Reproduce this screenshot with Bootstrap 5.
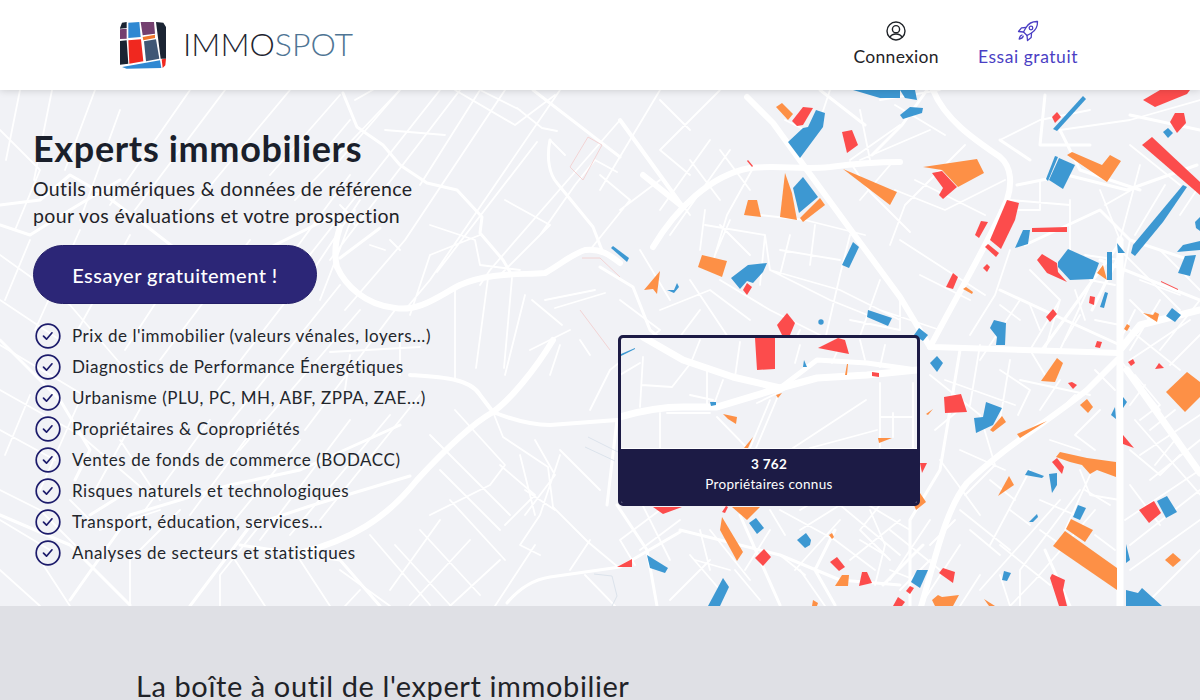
<!DOCTYPE html>
<html lang="fr">
<head>
    <meta charset="UTF-8">
    <meta name="viewport" content="width=device-width, initial-scale=1.0">
    <title>Immospot</title>
    <link href="https://cdn.jsdelivr.net/npm/bootstrap@5.3.0/dist/css/bootstrap.min.css" rel="stylesheet">
    <style>
        body { font-family: "Lato", "Liberation Sans", sans-serif; color: #1f2328; background: #dfe0e5; }
        .top-nav { height: 90px; background: #fff; padding: 0 122px 0 120px; box-shadow: 0 0 8px rgba(0,0,0,.18); z-index: 5; }
        .logo-word { font-size: 32px; font-weight: 300; color: #1e2530; margin-left: 16px; position: relative; top: -1px; }
        .logo-word span { color: #4f7594; }
        .nav-item-link { color: #1f2328; font-size: 17.5px; line-height: 22px; text-decoration: none; letter-spacing: .3px; }
        .nav-item-link svg { display: block; margin: 0 auto 5px; }
        .nav-item-link.trial { color: #4b3fc4; letter-spacing: .55px; }
        .nav-item-link.trial svg { margin: -1px auto 4px; }
        .nav-gap { gap: 39px; margin-top: -2px; }
        .hero { height: 516px; background: #f1f2f6; overflow: hidden; }
        .hero-map { left: 0; top: 0; }
        .hero-text { padding: 36px 0 0 33px; }
        .hero-text h1 { font-size: 36px; line-height: 44px; font-weight: 700; color: #1a1f2b; margin: 0 0 5px; letter-spacing: .65px; }
        .hero-sub { font-size: 19.5px; line-height: 27px; margin: 0 0 16px; letter-spacing: .35px; }
        .try-btn { width: 284px; height: 59px; background: #2c2677; color: #fff; font-size: 20px; font-weight: 500; border: 1px solid #241f68; letter-spacing: .45px; display: flex; align-items: center; justify-content: center; }
        .try-btn:hover { background: #2c2677; color: #fff; }
        .check-list { margin: 16px 0 0 2px; }
        .check-list li { height: 31px; gap: 11px; font-size: 17px; letter-spacing: .55px; color: #23262c; }
        .stat-box { left: 618px; top: 245px; width: 302px; height: 171px; border: 3px solid #1c1b45; border-radius: 5px; background: #f1f2f6; overflow: hidden; }
        .stat-box svg { display: block; }
        .stat-foot { height: 55px; background: #1c1b45; color: #fff; font-size: 13.5px; line-height: 20px; padding-top: 5px; letter-spacing: .3px; border-top: 1px solid #fff; }
        .tools { height: 94px; overflow: hidden; padding: 62px 0 0 136px; }
        .tools h2 { font-size: 29px; font-weight: 400; line-height: 36px; margin: 0; letter-spacing: .6px; color: #1f2328; }
        .rd { fill: none; stroke: #fff; stroke-linecap: round; stroke-linejoin: round; }
        .o { fill: #fd9046; } .r { fill: #fc4c4c; } .b { fill: #3d98d2; }
    </style>
</head>
<body>
    <nav class="navbar top-nav position-relative d-flex justify-content-between align-items-center">
        <a class="d-flex align-items-center text-decoration-none" href="#">
            <svg width="47" height="47" viewBox="60 60 141 141">
                <path fill="#1b2433" d="M60 78l6-16 14-2v18l-20 2zM60 117l20-2 5 70-25 3zM168 60l22 2 8 13v95l-16 0z"/>
                <path fill="#74406f" d="M60 82l20-2v30l-20 1zM122 60h40l3 35-37 5z"/>
                <path fill="#2f88d2" d="M85 62l33-2 4 45-37 3zM66 195l114-20 4 23-104 2z"/>
                <path fill="#f0752a" d="M128 105l37-7v10l-35 7z"/>
                <path fill="#f0281f" d="M85 115l38-3 7 66-42 7zM185 172l13-2-2 20-8 8z"/>
                <path fill="#3f5775" d="M132 118l36-6 10 58-40 8z"/>
            </svg>
            <span class="logo-word">IMMO<span>SPOT</span></span>
        </a>
        <div class="d-flex nav-gap text-center">
            <a class="nav-item-link" href="#">
                <svg width="20" height="20" viewBox="0 0 20 20" fill="none" stroke="#1f2328" stroke-width="1.4"><circle cx="10" cy="10" r="9"/><circle cx="10" cy="8.2" r="3.6"/><path d="M3.8 16.4c1.2-2.4 3.400-3.400 6.200-3.400s5 1 6.200 3.400"/></svg>
                Connexion
            </a>
            <a class="nav-item-link trial" href="#">
                <svg width="22" height="22" viewBox="0 0 22 22" fill="none" stroke="#4b3fc4" stroke-width="1.3" stroke-linejoin="round" stroke-linecap="round"><path d="M20.500 1.500c-5-.2-9 2-11.500 6l-2.500 4.500 3.500 3.500 4.500-2.500c4-2.500 6.200-6.500 6-11.500z"/><circle cx="14" cy="8" r="1.800"/><path d="M9 7.500l-4.500.3-3 3.700 5 .5M14.500 13l-.3 4.500-3.700 3-.5-5M5 15c-1.500.5-2.500 2-2.800 4 2-.3 3.500-1.300 4-2.800"/></svg>
                Essai gratuit
            </a>
        </div>
    </nav>

    <section class="hero position-relative">
        <svg class="hero-map position-absolute" width="1200" height="516" viewBox="0 90 1200 516">
            <g class="rd" stroke-width="1.800">
                <path d="M0 130l40 40-25 60M52 90l-18 90M20 90l-14 70M95 90l-30 80M120 110l-40 110M190 90l-80 115M225 90l-90 120M290 90l-100 120M340 95l-70 80M400 90l-105 110"/>
                <path d="M440 90l-150 190M460 90l-130 170M505 90l-100 150-60 70M560 90l-130 190-25 30M620 120l-130 150-10 15M520 110l-40-20M455 90l60 35 40-30M517 108l25 20 15 3M537 142l-100 130M505 200l45 25M550 225l-50 50M550 140l15 15M595 160l-20 25-35 50M595 160l22 12M520 270l-40-5-5-25-45-15M430 255l50-20M430 255l-20 60M400 250l-10-10M370 245l15 5M320 300l35-90M300 290l60-90M280 270l70-95M345 210l10 15M340 205l15 15"/>
                <path d="M480 90l-60 95M400 90l-60 70M355 100l35-20M350 120l-25 30M385 130l60 5M0 255l70 50 60 70M0 300l60 40M0 345l100 60M30 240l-25 60M80 230l-45 100M130 235l-55 100M190 250l-65 100M250 240l-90 120M310 270l-100 130M340 285l-120 150M360 310l-120 140M395 310l-90 120M455 290l0 60 0 30M488 278l-12 90M512 278l-8 90M525 295l-20 80M532 300l30 25M545 300l50-10M555 308l50-15M560 345l-10 30M580 340l10 15M570 330l-40 20M330 352l90-5M350 355l-5 35M400 375l0-40"/>
                <path d="M0 390l80 45 70 60M0 430l55 30M0 490l40 20 35 35M30 395l-25 60M80 400l-40 90M145 400l-50 90M210 420l-65 90M260 420l-70 95M300 440l-90 110M350 420l-90 120M390 415l-100 120M420 395l-100 125M430 435l80 80M440 470l60 60M455 410l50 55-15 20-60 30M500 465l35 30-30 30M520 455l15 60M535 440l20 35M560 450l40 40M555 475l-30 40M555 510l-30-20M560 455l-20 60-20 30 20 10M493 412l10 25 45 30 5 40 35 35 30 25M450 500l55 60M420 530l60 65M395 545l55 60M340 570l50 36M370 535l60 70M300 560l30 46M440 520l-50 70M470 540l-60 65M500 560l-50 46M535 545l-40 61M590 540l-20 30M585 575l30 31M120 440l40 60M70 500l30 30 60-20M0 520l50 30M180 510l-50 50 0 46M260 525l-40 50 0 31M235 560l30 46M360 590l-15 16M40 560l30 46M0 570l40 36"/>
                <path d="M620 300l40 30-50 40-20 40M640 250l30 50M660 310l50-20 40 30M690 280l40 60M720 225l30 30M600 175l30 25-40 50M660 90l-60 100M720 90l-60 60 30 25M690 130l-30-30M710 140l-50 70M730 150l-60 85M752 170l-25 45-15 50M620 210l40-30M660 175l30 40M690 160l30 40M720 150l30 40M730 220l-15 35M705 210l-5 40M760 215l45 5 60 15M705 225l60 10 5 35 70 20 60 30M765 235l-5 50M790 235l-10 40M815 225l-5 40M850 235l-10 40-15 65M840 260l-60-10M770 270l60 30 50 20M720 280l50 30 70 35M700 310l-30 40M800 330l-10 20M880 280l-25 70M850 320l50 10M900 300l0 30M850 162l20 30 40 40M890 165l-30 35M900 125l-50 35M830 90l-15 45-30-15M860 110l10 50M880 100l60-10M930 130l-70 30M945 135l-50-30M965 145l-60 60-15 40M1005 180l-60 30-50-20M985 215l-70-35M900 240l85 55M920 275l50 25M880 310l60 20M1010 250l-15 45-25 40M1030 270l30 30-15 50M1020 300l-40 60M1060 300l-30 50M1090 285l-30 65M1070 200l0 50M1040 180l0 30-40 0M1010 200l60 5M1000 140l40-20 50-10M1060 130l70-10 70-20M1130 145l50 40M1105 205l35-20M1100 190l20 50M1140 165l-20 75M1165 185l-30 50M1180 215l20-30M1120 250l60 60M1160 250l40 40M1135 310l-15 30M1160 300l-30 50M1200 300l-40 50M1190 320l-60 40M1200 335l-30 30"/>
                <path d="M1130 240l-10 50M1085 255l35 5M1140 280l40 15M1130 330l50 40M930 375l50 40 15 50-30 30M945 380l70 25M960 450l45 20M935 430l30-25M1020 380l70 15M1010 360l-10 60M980 345l-10 60M1030 470l-40 75M1060 500l-80 90M1080 490l-60 80 0 36M1095 510l-60 70-25 26M1120 500l-30-5-10-25M1090 475l-25 55M1040 530l35 25M1000 545l50 40M960 510l50 40M940 460l40 55M890 530l50 40M900 480l-40 50 30 30M860 500l50 30M850 560l50-40M930 520l-40 60M960 545l-40 61M980 575l-20 31M1000 575l10 31M800 530l40-25 60 50M840 520l-45 50M780 510l55 30 40 30M770 530l-25 40M750 580l-40-50M700 530l10 40M660 510l-40 30 15 25M640 500l30 60M680 520l-40 30M720 590l-30-35M670 600l40-40M760 600l-25-30M800 570l25 36M870 510l15 35 -10 40M1135 420l70 80M1140 455l60-40M1150 480l50-40M1130 485l30 40M1125 520l75-50M1130 545l70-55M1130 570l70-50M1150 600l50-50M1160 410l-40-50"/>
                <path d="M1000 370l30 20-12 25M1030 350l15 25M1060 380l-20 30M1075 395l-25 25M1095 370l20 20M1100 410l-25 25 20 15M1135 375l25 30-20 15M1145 385l-15 20M1150 430l25-20M1175 440l-20 25M1130 450l30 25 20-20M1090 280l25 5M1095 320l25 5M1075 290l10 30M1130 300l20 20M1150 320l-20 20M1065 340l15-25M1040 330l-10-25M1020 320l-20-15M1050 440l30 10M1040 500l35 15M1085 490l25 15M1095 535l20 15M1010 510l20 15M990 480l25 20M970 530l30 25M930 545l25-25M900 590l30-30M860 540l25 15M800 510l25-15M770 510l15 25M780 555l25 20M890 570l25 10M695 560l35 10"/>
            </g>
            <g class="rd" stroke-width="3">
                <path d="M0 205l40-5 30-25 35 20 40 30 45 35 45 5 60-30 40-20M0 225l30 10 40-25 50-30M0 340l60 60 30 50-15 30M70 600l60-85 100-30 70-15 100-45M190 606l60-80 60-20 100-30M0 515l70 30 60 60M90 515l40-25M240 545l100 15 40 46M340 258l40-30"/>
                <path d="M343 93l14 34 26 18 17 20 27 18 30 7 25 27-2 16 23 27 7 12M550 140c-4 20 0 35 7 43l36 44 10 26M533 90l87 67M600 267l33 20 17 43M650 330l30 25M507 603c15-18 30-24 43-26l70-10 60-35M680 530l100 25 60 25 60 5M835 605l-20-35 20-40M740 515l40 90M617 420l-10 85M617 505l30 45 10 56M883 585l40-40M1000 140l30 20M1045 95l-5 50 50 0M1060 130l20 40 60 20M1130 115l70 15"/>
                <path d="M820 90l45 35M927 90l-25 35-30 30M1017 185l50-10 60 15 70-25M1100 260l100 40M1025 245l75-35 30 30 60 20M1122 240l-80 110M1122 250l-30 60M1000 290l65 30 55 25M960 350l-20 120 -30 50 0 86M1045 550l25 56"/>
            </g>
            <g class="rd" stroke-width="4"><path d="M410 375c30 2 60 3 70 20l13 17c20 8 40 13 57 13l67-5M620 120l63 87"/></g>
            <g class="rd" stroke-width="6">
                <path d="M337 267c8 18 28 38 58 41 25 4 45-13 65-23 30-13 60-10 85-12 15-8 25-18 40-23 15-2 25 5 35 13M340 227c-5 15-6 28-3 40M300 553c50-13 85-33 117-73 23-25 53-55 76-68 17-12 42-42 60-72M747 97l26 26 34 47 46 63 47 64 30 50"/>
                <path d="M653 247c22-37 57-72 97-79 30-3 50 2 80-1 30-4 50-5 70-5M683 207l-40-32M933 90c12 30 42 50 67 67 12 10 12 28 7 43-17 40-47 90-77 147M933 347l187 6M920 610c15-50 25-100 47-127 33-33 83-63 120-93l30-30"/>
            </g>
            <g class="rd" stroke-width="7"><path d="M1120 240v370M1127 370l73 103M1120 350l20-25 60-15"/></g>
            <g fill="none" stroke="#f3cccc" stroke-width=".8"><path d="M588 137l14 8-19 35-13-13zM582 258h18l20 19M580 310l30 40"/></g>
            <g fill="none" stroke="#d5dee8" stroke-width=".8"><path d="M588 437l30 15M585 447l30 14M594 574l18 2 5 20-5 10"/></g>
            <g>
                <polygon class="b" points="853,90 900,90 900,98 880,98"/>
                <polygon class="b" points="900,90 915,90 917,100 905,98"/>
                <polygon class="b" points="900,115 910,107 923,108 922,113 903,119"/>
                <polygon class="o" points="776,107 782,103 793,114 788,120"/>
                <polygon class="r" points="792,121 803,107 813,108 803,125 797,126"/>
                <polygon class="b" points="788,142 803,128 808,127 816,110 825,113 823,127 800,158"/>
                <polygon class="r" points="842,132 852,130 858,145 847,153"/>
                <polygon class="o" points="843,169 897,192 890,205"/>
                <polygon class="o" points="785,173 792,193 797,220 780,217"/>
                <polygon class="b" points="793,188 803,177 818,197 799,213"/>
                <polygon class="o" points="800,218 820,198 825,205 803,222"/>
                <polygon class="o" points="744,215 748,200 757,200 761,217"/>
                <polygon class="b" points="842,265 853,242 859,247 849,268"/>
                <polygon class="o" points="698,267 702,255 727,261 722,277"/>
                <polygon class="b" points="731,278 748,265 767,263 763,272 753,283 747,281 740,289"/>
                <polygon class="r" points="743,290 747,283 752,287 747,295"/>
                <polygon class="o" points="644,290 660,271 657,294 653,289"/>
                <polygon class="b" points="611,248 613,246 629,258 627,262"/>
                <polygon class="b" points="667,290 674,290 677,283 679,287 674,293"/>
                <polygon class="r" points="777,325 787,313 795,323 790,335 782,335"/>
                <circle class="b" cx="821" cy="322" r="2.700"/>
                <polygon class="b" points="867,317 868,310 892,318 888,326"/>
                <polygon class="r" points="747,161 748,160 753,166 752,167"/>
                <polygon class="o" points="923,167 977,159 984,173 958,187 942,170"/>
                <polygon class="r" points="932,173 942,171 957,187 943,199 939,195 943,188"/>
                <polygon class="b" points="1053,129 1083,96 1086,99 1057,131"/>
                <polygon class="r" points="1052,117 1057,112 1061,117 1055,123"/>
                <polygon class="r" points="1143,100 1160,90 1190,90 1187,94 1155,107"/>
                <polygon class="r" points="1170,122 1175,113 1184,113 1186,123 1177,133"/>
                <polygon class="b" points="1163,132 1168,128 1173,133 1168,138"/>
                <polygon class="r" points="1142,145 1152,137 1200,182 1200,195"/>
                <polygon class="b" points="1131,253 1133,245 1183,185 1187,187 1163,222 1135,256"/>
                <polygon class="o" points="1067,155 1072,152 1102,165 1110,155 1121,161 1107,182"/>
                <polygon class="b" points="1049,180 1059,158 1075,165 1063,189"/>
                <polygon class="b" points="1046,179 1055,156 1058,157 1048,181"/>
                <polygon class="r" points="990,240 1007,200 1019,203 1015,220 1001,249"/>
                <polygon class="r" points="975,235 981,221 988,222 979,238"/>
                <polygon class="r" points="985,247 988,244 999,253 996,257"/>
                <polygon class="r" points="983,268 987,264 990,267 987,272"/>
                <polygon class="b" points="1015,248 1023,230 1030,230 1028,244"/>
                <polygon class="r" points="1032,228 1067,227 1067,232 1032,232"/>
                <polygon class="r" points="1037,260 1042,254 1057,263 1058,272 1067,282 1047,273"/>
                <polygon class="b" points="1058,262 1068,249 1099,263 1093,279 1070,280 1058,267"/>
                <polygon class="o" points="1097,273 1103,265 1107,280"/>
                <polygon class="b" points="1107,280 1107,252 1112,252 1112,280"/>
                <polygon class="b" points="1117,243 1125,253 1118,253"/>
                <polygon class="b" points="1177,252 1183,245 1200,241 1200,250"/>
                <polygon class="b" points="1178,273 1185,256 1196,255 1190,276"/>
                <polygon class="b" points="1195,222 1200,217 1200,231 1196,228"/>
                <polygon class="r" points="1161,281 1178,289 1178,290 1161,282"/>
                <polygon class="r" points="946,287 953,273 958,277 953,289"/>
                <polygon class="o" points="963,289 966,287 973,292 972,294"/>
                <polygon class="r" points="1089,303 1090,296 1095,297 1094,305"/>
                <polygon class="b" points="1100,307 1105,292 1108,293 1104,308"/>
                <polygon class="r" points="1046,317 1053,309 1057,314 1050,322"/>
                <polygon class="o" points="1143,313 1153,315 1155,312 1159,314 1157,322"/>
                <polygon class="b" points="1166,316 1172,308 1181,315 1175,322"/>
                <polygon class="b" points="990,328 994,320 1006,323 1005,345 996,345 997,337"/>
                <polygon class="o" points="1124,329 1127,324 1130,326 1127,331"/>
                <polygon class="r" points="1095,347 1097,341 1102,342 1100,348"/>
                <polygon class="b" points="914,335 919,328 928,335 923,341"/>
                <polygon class="b" points="930,363 937,356 943,363 937,372"/>
                <polygon class="r" points="944,397 961,394 967,412 945,413"/>
                <polygon class="b" points="974,418 983,417 986,402 1002,408 993,425 976,433"/>
                <polygon class="o" points="990,430 1002,416 1006,422 993,432"/>
                <polygon class="o" points="1017,434 1047,421 1020,438"/>
                <polygon class="o" points="1041,381 1057,358 1063,363 1055,382"/>
                <polygon class="r" points="1068,383 1072,382 1077,385 1073,389"/>
                <polygon class="o" points="1080,405 1087,399 1093,407 1088,413"/>
                <polygon class="b" points="1111,415 1115,407 1116,419"/>
                <polygon class="b" points="1123,397 1127,402 1123,408"/>
                <polygon class="r" points="1123,435 1134,448 1123,444"/>
                <polygon class="o" points="1166,392 1187,372 1200,382 1200,397 1185,412"/>
                <polygon class="r" points="1155,369 1159,363 1164,368"/>
                <polygon class="r" points="1128,362 1133,359 1135,363 1131,366"/>
                <polygon class="o" points="1056,457 1060,452 1087,458 1116,462 1116,477 1097,470 1090,474 1082,465 1070,462"/>
                <polygon class="r" points="1052,462 1057,458 1064,467 1062,474"/>
                <polygon class="o" points="998,496 1009,476 1014,485"/>
                <polygon class="b" points="1025,475 1028,470 1044,476 1042,478"/>
                <polygon class="b" points="1049,474 1057,473 1057,485 1052,493"/>
                <polygon class="b" points="1073,517 1078,505 1086,508 1080,520"/>
                <polygon class="r" points="1139,510 1154,501 1161,513 1149,523"/>
                <polygon class="b" points="1157,501 1167,496 1177,512 1166,518"/>
                <polygon class="o" points="1066,529 1071,519 1093,530 1085,542"/>
                <polygon class="o" points="1053,546 1065,531 1117,568 1117,590"/>
                <polygon class="b" points="1029,522 1037,514 1038,517 1033,522"/>
                <polygon class="o" points="1165,560 1173,553 1181,560 1173,567"/>
                <polygon class="b" points="1126,544 1130,560 1126,563"/>
                <polygon class="b" points="1126,590 1138,593 1142,588 1162,606 1126,606"/>
                <polygon class="r" points="1050,578 1052,574 1065,580 1063,590 1067,606 1059,606"/>
                <polygon class="b" points="1002,580 1004,571 1011,573 1007,581"/>
                <polygon class="r" points="939,573 943,568 955,572 953,583"/>
                <polygon class="b" points="911,582 917,570 928,570 920,588"/>
                <polygon class="r" points="906,591 910,586 914,588 910,594"/>
                <polygon class="o" points="932,600 938,595 942,597 959,595 953,606 935,606"/>
                <polygon class="o" points="984,599 995,606 989,606"/>
                <polygon class="r" points="893,606 898,597 905,602 902,606"/>
                <polygon class="b" points="749,523 756,518 764,528 757,534"/>
                <polygon class="o" points="720,530 722,517 743,552 737,561"/>
                <polygon class="b" points="797,540 806,533 811,540 810,545 805,548"/>
                <polygon class="o" points="829,535 832,533 834,537 832,539"/>
                <polygon class="r" points="755,558 764,549 771,557 763,566"/>
                <polygon class="r" points="830,562 837,557 845,567 839,571"/>
                <polygon class="o" points="835,586 842,575 849,575 848,586"/>
                <polygon class="r" points="859,586 862,572 867,572 872,583"/>
                <polygon class="r" points="617,567 632,559 632,567"/>
                <polygon class="b" points="647,555 668,568 665,573 650,568"/>
                <polygon class="b" points="708,606 723,578 729,587 720,606"/>
                <polygon class="o" points="812,606 813,600 818,603 817,606"/>
                <polygon class="r" points="653,507 682,507 663,514"/>
                <polygon class="o" points="732,507 760,507 747,520"/>
                <polygon class="r" points="722,512 726,506 728,507 725,513"/>
                <polygon class="r" points="920,463 927,463 922,473"/>
                <polygon class="o" points="918,490 926,502 916,510 912,500"/>
                <polygon class="o" points="926,414 933,409 928,415"/>
            </g>
        </svg>

        <div class="hero-text position-relative">
            <h1>Experts immobiliers</h1>
            <p class="hero-sub">Outils numériques &amp; données de référence<br>pour vos évaluations et votre prospection</p>
            <a class="btn rounded-pill try-btn" href="#">Essayer gratuitement !</a>
            <ul class="list-unstyled check-list">
                <li class="d-flex align-items-center"><svg width="26" height="26" viewBox="0 0 26 26" fill="none" stroke="#1c1b6b" stroke-width="1.700"><circle cx="13" cy="13" r="11.800"/><path d="M8.500 13.200l3 3 5.500-6.400" stroke-linecap="round" stroke-linejoin="round"/></svg>Prix de l'immobilier (valeurs vénales, loyers...)</li>
                <li class="d-flex align-items-center"><svg width="26" height="26" viewBox="0 0 26 26" fill="none" stroke="#1c1b6b" stroke-width="1.700"><circle cx="13" cy="13" r="11.800"/><path d="M8.500 13.200l3 3 5.500-6.400" stroke-linecap="round" stroke-linejoin="round"/></svg>Diagnostics de Performance Énergétiques</li>
                <li class="d-flex align-items-center"><svg width="26" height="26" viewBox="0 0 26 26" fill="none" stroke="#1c1b6b" stroke-width="1.700"><circle cx="13" cy="13" r="11.800"/><path d="M8.500 13.200l3 3 5.500-6.400" stroke-linecap="round" stroke-linejoin="round"/></svg>Urbanisme (PLU, PC, MH, ABF, ZPPA, ZAE...)</li>
                <li class="d-flex align-items-center"><svg width="26" height="26" viewBox="0 0 26 26" fill="none" stroke="#1c1b6b" stroke-width="1.700"><circle cx="13" cy="13" r="11.800"/><path d="M8.500 13.200l3 3 5.500-6.400" stroke-linecap="round" stroke-linejoin="round"/></svg>Propriétaires &amp; Copropriétés</li>
                <li class="d-flex align-items-center"><svg width="26" height="26" viewBox="0 0 26 26" fill="none" stroke="#1c1b6b" stroke-width="1.700"><circle cx="13" cy="13" r="11.800"/><path d="M8.500 13.200l3 3 5.500-6.400" stroke-linecap="round" stroke-linejoin="round"/></svg>Ventes de fonds de commerce (BODACC)</li>
                <li class="d-flex align-items-center"><svg width="26" height="26" viewBox="0 0 26 26" fill="none" stroke="#1c1b6b" stroke-width="1.700"><circle cx="13" cy="13" r="11.800"/><path d="M8.500 13.200l3 3 5.500-6.400" stroke-linecap="round" stroke-linejoin="round"/></svg>Risques naturels et technologiques</li>
                <li class="d-flex align-items-center"><svg width="26" height="26" viewBox="0 0 26 26" fill="none" stroke="#1c1b6b" stroke-width="1.700"><circle cx="13" cy="13" r="11.800"/><path d="M8.500 13.200l3 3 5.500-6.400" stroke-linecap="round" stroke-linejoin="round"/></svg>Transport, éducation, services...</li>
                <li class="d-flex align-items-center"><svg width="26" height="26" viewBox="0 0 26 26" fill="none" stroke="#1c1b6b" stroke-width="1.700"><circle cx="13" cy="13" r="11.800"/><path d="M8.500 13.200l3 3 5.500-6.400" stroke-linecap="round" stroke-linejoin="round"/></svg>Analyses de secteurs et statistiques</li>
            </ul>
        </div>

        <div class="stat-box position-absolute">
            <svg width="296" height="110" viewBox="621 338 296 110">
                <g class="rd" stroke-width="7"><path d="M620 417c20-6 40-10 63-10l34 0 63-19 37-10 50-3 50-5M643 337l40 23 50 17 47 11"/></g>
                <g class="rd" stroke-width="5"><path d="M780 388l37-28 50 3 50 7"/></g>
                <g class="rd" stroke-width="1.800">
                    <path d="M643 357l-3 50M672 387l18-23M642 385l30 2M690 395l23 5M660 413v35M667 413h43M707 370v37M723 380l-10 27M757 403l27-13M793 448l73-48M810 448l67-18M880 383v65M913 383v65M880 417h33M893 413v24M717 417l30 31M770 400l-20 48M778 396l-22 52M620 375l20-12M840 345l-8 18M860 340l5 20M885 345l-5 22M700 340l-10 25M740 342l-5 35M800 345l-5 18"/>
                </g>
                <polygon class="r" points="755,338 775,338 775,369 757,370"/>
                <polygon class="r" points="818,348 838,338 845,340 849,354"/>
                <polygon class="b" points="804,360 807,367 803,367"/>
                <polygon class="o" points="847,364 848,364 847,375 845,375"/>
                <polygon class="r" points="872,372 879,373 879,377 872,376"/>
                <polygon class="b" points="710,402 716,402 716,405 711,406"/>
                <polygon class="b" points="621,354 635,348 635,349 621,356"/>
                <polygon class="o" points="723,414 737,417 736,424 728,419"/>
                <polygon class="o" points="776,395 782,393 778,398"/>
                <polygon class="o" points="744,448 753,437 748,448"/>
                <polygon class="o" points="878,438 892,438 879,443"/>
            </svg>
            <div class="stat-foot text-center"><strong>3 762</strong><br>Propriétaires connus</div>
        </div>
    </section>

    <section class="tools">
        <h2>La boîte à outil de l'expert immobilier</h2>
    </section>

    <script src="https://cdn.jsdelivr.net/npm/bootstrap@5.3.0/dist/js/bootstrap.bundle.min.js"></script>
</body>
</html>
